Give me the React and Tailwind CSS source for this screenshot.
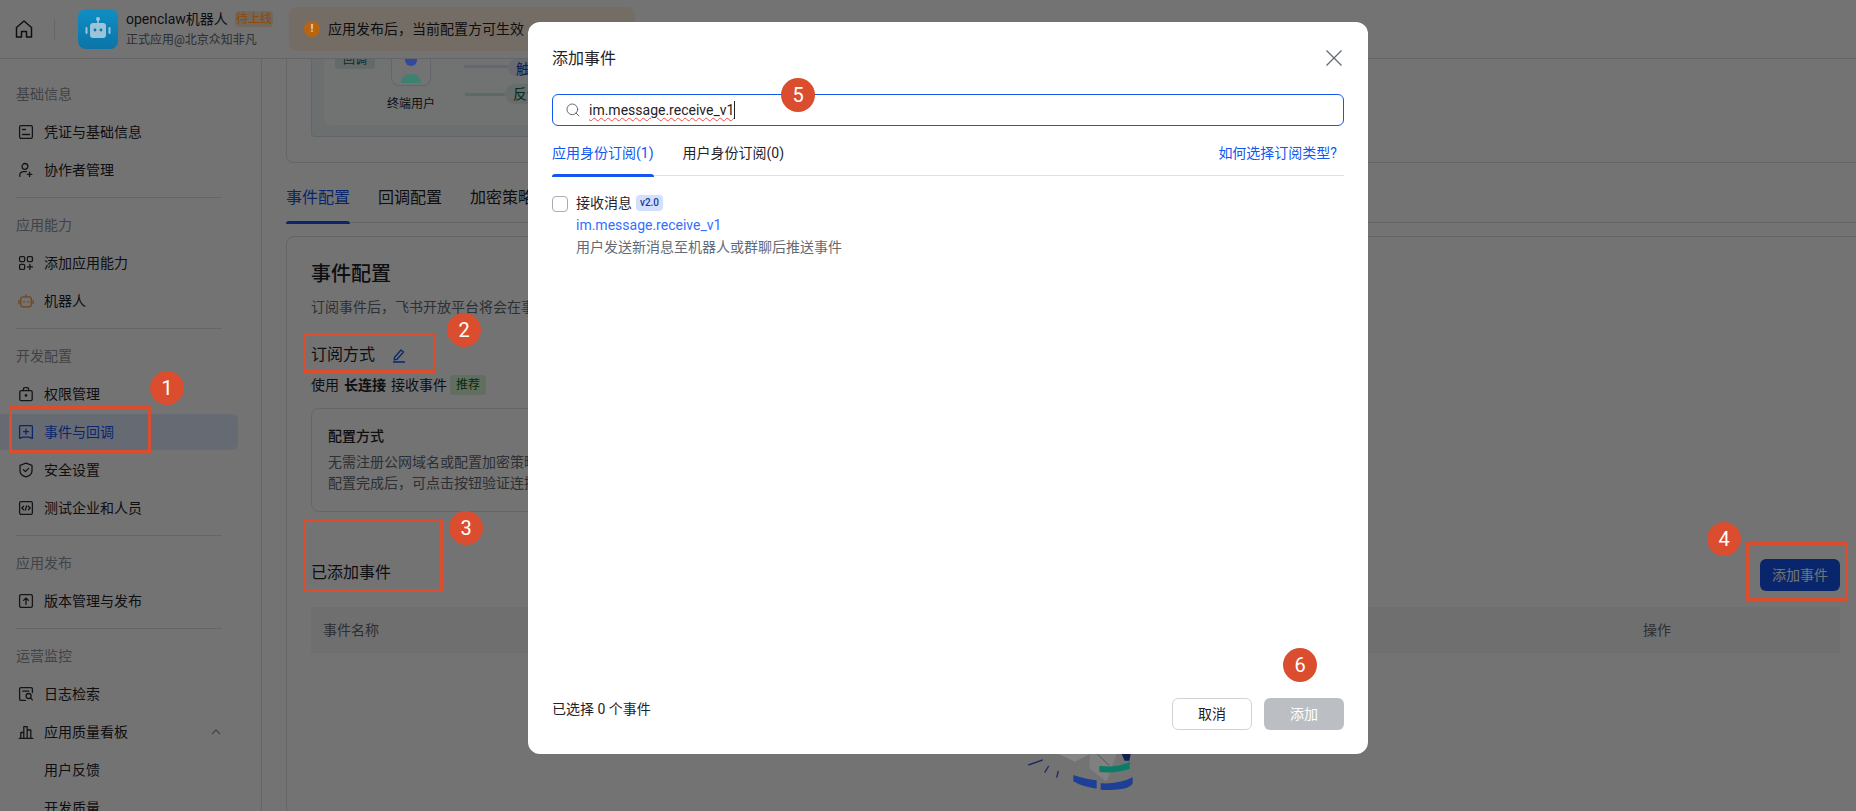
import { Search } from 'lucide-react';

const FONT = "font-['Roboto','Noto_Sans_CJK_SC',sans-serif]";

// stroke icons for the side menu, all on a 16 box
function Ico({ children, className = 'text-[#2b2f36]' }) {
  return (
    <svg width="16" height="16" viewBox="0 0 16 16" fill="none" stroke="currentColor" strokeWidth="1.300" strokeLinecap="round" strokeLinejoin="round" className={`shrink-0 ${className}`}>
      {children}
    </svg>
  );
}

const icons = {
  card: <><rect x="1.600" y="1.600" width="12.800" height="12.800" rx="1.600" /><path d="M4.500 5.500h3M4.500 10.500h7" /></>,
  user: <><circle cx="7" cy="4.400" r="2.900" /><path d="M1.800 14.400v-1.200c0-2.200 1.800-3.600 4-3.600h2.600M11.600 10.200v4.400M9.400 12.400h4.400" /></>,
  apps: <><rect x="1.600" y="1.600" width="5" height="5" rx="1" /><rect x="9.400" y="1.600" width="5" height="5" rx="1" /><rect x="1.600" y="9.400" width="5" height="5" rx="1" /><path d="M11.900 9.400v5M9.400 11.900h5" /></>,
  bot: <><rect x="2.800" y="3.800" width="10.400" height="10" rx="2" /><path d="M8 3.800V1.800M.9 7.400v3.200M15.100 7.400v3.200M6 8.600v.6M10 8.600v.6" /></>,
  bag: <><rect x="1.800" y="4.600" width="12.400" height="10" rx="1.400" /><path d="M5.400 4.600V3a1.400 1.400 0 0 1 1.400-1.400h2.400A1.400 1.400 0 0 1 10.600 3v1.600" /><circle cx="8" cy="9.400" r=".7" fill="currentColor" /></>,
  event: <><path d="M1.600 2.600a1 1 0 0 1 1-1h10.800a1 1 0 0 1 1 1v11.800L11 13.200H5L1.600 14.400z" /><path d="M8 5.200v5M5.500 7.700h5" /></>,
  shield: <><path d="M8 1.200l6 2.200v5.400c0 3-2.600 5.200-6 6-3.400-.8-6-3-6-6V3.400z" /><path d="M5.500 7.800l1.900 1.800 3.200-3.200" /></>,
  code: <><rect x="1.600" y="1.600" width="12.800" height="12.800" rx="1.600" /><path d="M5.600 6.200L3.800 8l1.800 1.800M10.400 6.200L12.200 8l-1.800 1.800M8.700 5.800l-1.400 4.400" /></>,
  upload: <><rect x="1.600" y="1.600" width="12.800" height="12.800" rx="1.600" /><path d="M8 11.400V5.200M5.600 7.400L8 5l2.400 2.400" /></>,
  log: <><path d="M14.400 6.500V3a1.400 1.400 0 0 0-1.400-1.400H3A1.400 1.400 0 0 0 1.600 3v10A1.400 1.400 0 0 0 3 14.400h4.500M4.800 5.200h6" /><circle cx="10.600" cy="10" r="2.500" /><path d="M12.500 12l1.900 1.900" /></>,
  chart: <><path d="M1.200 14.400h13.600M2.800 14.400V8.500h3v5.900M5.800 14.400V2.600h3.400v11.800M9.200 14.400V6h3.600v8.400" /></>,
};

function Label({ children }) {
  return <div className="h-[38px] pl-4 flex items-center text-sm text-[#8f959e]">{children}</div>;
}

function Item({ icon, children, active, iconClass, arrow }) {
  return (
    <div className="h-[38px] flex items-center">
      <div className={`w-[238px] h-9 flex items-center gap-[10px] pl-[18px] pr-4 rounded-r-md text-sm ${active ? 'bg-[#e1eaff] text-[#1456f0]' : 'text-[#1f2329]'}`}>
        {icon ? <Ico className={active ? 'text-[#1456f0]' : iconClass}>{icons[icon]}</Ico> : <span className="w-4 shrink-0" />}
        <span className="flex-1">{children}</span>
        {arrow && (
          <svg width="12" height="12" viewBox="0 0 12 12" fill="none" stroke="#8f959e" strokeWidth="1.200"><path d="M2 8l4-4 4 4" /></svg>
        )}
      </div>
    </div>
  );
}

function Divider() {
  return <div className="ml-4 w-[206px] h-px bg-[#dee0e3] my-2" />;
}

function Sidebar() {
  return (
    <aside className="w-[262px] shrink-0 border-r border-[#dee0e3] pt-4">
      <Label>基础信息</Label>
      <Item icon="card">凭证与基础信息</Item>
      <Item icon="user">协作者管理</Item>
      <Divider />
      <Label>应用能力</Label>
      <Item icon="apps">添加应用能力</Item>
      <Item icon="bot" iconClass="text-[#f09c3e]">机器人</Item>
      <Divider />
      <Label>开发配置</Label>
      <Item icon="bag">权限管理</Item>
      <Item icon="event" active>事件与回调</Item>
      <Item icon="shield">安全设置</Item>
      <Item icon="code">测试企业和人员</Item>
      <Divider />
      <Label>应用发布</Label>
      <Item icon="upload">版本管理与发布</Item>
      <Divider />
      <Label>运营监控</Label>
      <Item icon="log">日志检索</Item>
      <Item icon="chart" arrow>应用质量看板</Item>
      <Item>用户反馈</Item>
      <Item>开发质量</Item>
    </aside>
  );
}

function Header() {
  return (
    <header className="h-[59px] shrink-0 flex items-center bg-white border-b border-[#dee0e3]">
      <svg width="20" height="20" viewBox="0 0 20 20" fill="none" stroke="#1f2329" strokeWidth="1.500" strokeLinejoin="round" className="ml-[14px]">
        <path d="M2.500 8.500L10 2l7.500 6.500V18h-5v-5.500h-5V18h-5z" />
      </svg>
      <div className="ml-[20px] w-px h-5 bg-[#dee0e3]" />
      {/* logo and warning colours stay saturated in the reference, so they sit over the dim layer */}
      <div className="relative z-[25] ml-[23px] w-10 h-10 rounded-lg bg-gradient-to-b from-[#0f8fc4] to-[#0b74a8] flex items-center justify-center">
        <svg width="28" height="28" viewBox="0 0 28 28" fill="#9cc4d8">
          <circle cx="14" cy="4" r="2" />
          <rect x="13.200" y="4" width="1.600" height="4" />
          <rect x="6" y="8" width="16" height="15" rx="3" />
          <rect x="1.500" y="12" width="2" height="7" rx="1" />
          <rect x="24.500" y="12" width="2" height="7" rx="1" />
          <circle cx="11" cy="15" r="1.400" fill="#0b74a8" />
          <circle cx="17" cy="15" r="1.400" fill="#0b74a8" />
        </svg>
      </div>
      <div className="ml-2 w-[163px]">
        <div className="flex items-center h-[22px]">
          <span className="text-sm text-[#1f2329]">openclaw机器人</span>
          <span className="ml-[7px] h-4 px-px rounded bg-[#ffe6cc] text-xs leading-4">
            <span className="relative z-[25] text-[#8f4708]">待上线</span>
          </span>
        </div>
        <div className="text-xs leading-5 text-[#646a73]">正式应用@北京众知非凡</div>
      </div>
      <div className="w-[346px] h-11 rounded-lg bg-[#fff1e0] flex items-center pl-[15px]">
        <span className="relative z-[25] w-4 h-4 rounded-full bg-[#b9640f] text-[#e0d5c8] text-[11px] font-bold leading-4 text-center">!</span>
        <span className="ml-2 text-sm text-[#1f2329]">应用发布后，当前配置方可生效</span>
        <span className="ml-[37px] text-sm text-[#1456f0]">申请发布</span>
      </div>
    </header>
  );
}

// the flow diagram is scrolled mostly under the header
function FlowCard() {
  return (
    <div className="relative h-[104px] mr-[-9px] border border-t-0 border-[#dee0e3] rounded-b-lg">
      <div className="absolute left-[24px] top-0 w-[900px] h-[78px] bg-[#eef6f6] border border-t-0 border-[#dee0e3] rounded-b-sm">
        <div className="ml-3 mr-3 h-[66px] bg-[#fbfdfd] rounded-b-md" />
      </div>
      <div className="absolute left-[48px] top-0 w-10 h-[10px] overflow-hidden rounded-b bg-[#dcecec] text-xs leading-[3px] text-center text-[#23605c]">回调</div>
      <div className="absolute left-[104px] top-0 w-10 h-[27px] overflow-hidden bg-white border border-t-0 border-[#dde0f0] rounded-b-lg flex justify-center">
        <svg width="28" height="26" viewBox="0 0 28 26" className="relative z-[25]">
          <circle cx="14" cy="1" r="6" fill="#33479f" />
          <path d="M4 24c0-12 20-12 20 0z" fill="#3c8270" />
        </svg>
      </div>
      <div className="absolute left-[100px] top-[36px] text-xs leading-[18px] text-[#1f2329]">终端用户</div>
      <div className="absolute left-[177px] top-[6px] w-[44px] h-[3px] bg-[#e1e4f5]" />
      <div className="absolute left-[221px] top-0 w-[40px] h-[17px] rounded-l-full bg-[#e8eafc] text-sm leading-[20px] pl-2 text-[#1e3fae]">触发</div>
      <div className="absolute left-[178px] top-[34px] w-[40px] h-[3px] bg-[#cfe8e2]" />
      <div className="absolute left-[218px] top-[25px] w-[40px] h-[20px] rounded-l-full bg-[#e3f1ec] text-sm leading-[20px] pl-2 text-[#0c5f49]">反馈</div>
    </div>
  );
}

function EventCard() {
  return (
    <section className="mt-[13px] mr-[-9px] border border-[#dee0e3] rounded-lg pl-6 pr-6 pt-[23px] h-[640px]">
      <h2 className="text-xl leading-7 font-medium text-[#1f2329]">事件配置</h2>
      <p className="mt-2 text-sm leading-[22px] text-[#646a73]">订阅事件后，飞书开放平台将会在事件发生时推送给应用</p>
      <div className="mt-[25px] flex items-center gap-4 text-base leading-6 text-[#1f2329]">
        订阅方式
        <svg width="16" height="16" viewBox="0 0 16 16" fill="none" stroke="#1456f0" strokeWidth="1.300" strokeLinejoin="round">
          <path d="M3.500 10.500l6.500-7.500 2.500 2-6.500 7.300-2.700.6zM2 15h12" />
        </svg>
      </div>
      <div className="mt-[7px] flex items-center text-sm leading-[22px] text-[#1f2329]">
        使用<b className="mx-[5px] font-semibold">长连接</b>接收事件
        <span className="ml-[3px] h-5 px-[6px] rounded bg-[#d9f5d6] text-xs leading-5 text-[#186010]">推荐</span>
      </div>
      <div className="mt-3 w-[860px] h-[104px] border border-[#dee0e3] rounded-lg pl-4 pt-4">
        <div className="text-sm leading-[22px] font-medium text-[#1f2329]">配置方式</div>
        <p className="mt-[5px] text-sm leading-[21px] text-[#646a73]">无需注册公网域名或配置加密策略，通过飞书 SDK 建立长连接即可接收事件</p>
        <p className="text-sm leading-[21px] text-[#646a73]">配置完成后，可点击按钮验证连接状态</p>
      </div>
      <div className="mt-[47px] flex justify-between items-start">
        <span className="pt-[2px] text-base leading-6 text-[#1f2329]">已添加事件</span>
        <button className="w-20 h-8 rounded-md bg-[#1456f0] text-sm text-white">添加事件</button>
      </div>
      <div className="mt-4 h-[46px] bg-[#f5f6f7] flex items-center justify-between pl-3 text-sm text-[#646a73]">
        <span>事件名称</span>
        <span className="w-[197px]">操作</span>
      </div>
    </section>
  );
}

function Dialog() {
  return (
    <div className="absolute z-30 left-[528px] top-[22px] w-[840px] h-[732px] bg-white rounded-xl px-6 flex flex-col">
      <div className="h-[72px] flex items-center justify-between">
        <span className="pt-[2px] text-base text-[#1f2329]">添加事件</span>
        <svg width="16" height="16" viewBox="0 0 16 16" stroke="#646a73" strokeWidth="1.300" className="mr-[2px]">
          <path d="M.5.500l15 15M15.500.500l-15 15" />
        </svg>
      </div>
      <div className="h-8 border border-[#1456f0] rounded-md flex items-center pl-3">
        <Search size={16} strokeWidth={1.500} className="text-[#646a73]" />
        <span className="ml-2 text-sm text-[#1f2329] underline decoration-wavy decoration-[#f54a45] decoration-1 underline-offset-2">im.message.receive_v1</span>
        <span className="w-px h-[18px] bg-[#1f2329]" />
      </div>
      <div className="mt-[14px] h-[36px] border-b border-[#dee0e3] flex items-start justify-between text-sm leading-[26px]">
        <div className="flex gap-[29px]">
          <span className="relative h-[36px] text-[#1456f0]">
            应用身份订阅(1)
            <span className="absolute left-0 right-0 bottom-[-1px] h-[3px] rounded-t bg-[#1456f0]" />
          </span>
          <span className="text-[#1f2329]">用户身份订阅(0)</span>
        </div>
        <span className="mr-[7px] text-[#1456f0]">如何选择订阅类型?</span>
      </div>
      <div className="mt-[18px] flex gap-2">
        <div className="mt-[2px] w-4 h-4 shrink-0 bg-white border border-[#a8adb5] rounded" />
        <div>
          <div className="flex items-center h-[18px] text-sm text-[#1f2329]">
            接收消息
            <span className="ml-1 h-4 w-[27px] rounded bg-[#d4e0fb] text-[10px] font-medium leading-4 text-center text-[#133c9a]">v2.0</span>
          </div>
          <div className="mt-[2px] text-sm leading-[22px] text-[#3370ff]">im.message.receive_v1</div>
          <div className="text-sm leading-[22px] text-[#646a73]">用户发送新消息至机器人或群聊后推送事件</div>
        </div>
      </div>
      <div className="mt-auto h-[56px] flex justify-between">
        <span className="text-sm leading-[22px] text-[#1f2329]">已选择 0 个事件</span>
        <div className="flex gap-3">
          <button className="w-20 h-8 rounded-md border border-[#d0d3d6] text-sm text-[#1f2329]">取消</button>
          <button className="w-20 h-8 rounded-md bg-[#bbbfc4] text-sm text-white">添加</button>
        </div>
      </div>
    </div>
  );
}

function Mark({ n, className }) {
  return (
    <div className={`absolute z-40 w-[34px] h-[34px] rounded-full bg-[#da4d2f] text-white text-xl leading-[34px] text-center ${className}`}>
      {n}
    </div>
  );
}

export default function App() {
  return (
    <div className={`relative w-[1856px] h-[811px] overflow-hidden bg-white ${FONT}`}>
      <div className="h-full flex flex-col">
        <Header />
        <div className="flex-1 min-h-0 flex">
          <Sidebar />
          <main className="flex-1 min-w-0 pl-6">
            <FlowCard />
            <div className="mt-[13px] h-[47px] mr-[-9px] border-b border-[#dee0e3] flex gap-7 text-base">
              <span className="relative h-[47px] pt-[10px] text-[#1456f0]">
                事件配置
                <span className="absolute left-0 right-0 bottom-[-1px] h-[3px] rounded-t bg-[#1456f0]" />
              </span>
              <span className="pt-[10px] text-[#1f2329]">回调配置</span>
              <span className="pt-[10px] text-[#1f2329]">加密策略</span>
            </div>
            <EventCard />
          </main>
        </div>
      </div>

      <div className="absolute inset-0 z-20 bg-black/55" />

      {/* empty state picture, mostly under the dialog */}
      <svg width="140" height="60" viewBox="0 0 420 180" className="absolute z-[25] left-[1010px] top-[745px]">
        <path d="M145 27l50 23 45-23z" fill="#868686" />
        <path d="M240 27l-2 43 52 40 30-83z" fill="#808080" />
        <path d="M262 27l36 35" stroke="#555" strokeWidth="3" />
        <path d="M335 27h27l-4 20-14 0z" fill="#0f1f55" />
        <path d="M268 62c30 5 60 3 92-12l-1 22c-30 10-60 12-91 9z" fill="#0a7d68" />
        <path d="M190 90c22 8 46 13 70 16v25c-26-3-50-10-70-22z" fill="#1e3f95" />
        <path d="M272 115c36 2 68-4 96-18v18c-8 18-50 22-96 19z" fill="#1e3f95" />
        <path d="M55 60l43-15M104 83l12-20M140 98l5-20" stroke="#1a2a60" strokeWidth="4" />
      </svg>

      <Dialog />

      {/* red notes drawn on top of the screenshot */}
      <div className="absolute z-40 left-[9px] top-[406px] w-[142px] h-[47px] border-[3px] border-[#da4d2f]" />
      <div className="absolute z-40 left-[303px] top-[333px] w-[133px] h-[40px] border-[3px] border-[#da4d2f]" />
      <div className="absolute z-40 left-[303px] top-[519px] w-[140px] h-[73px] border-[3px] border-[#da4d2f]" />
      <div className="absolute z-40 left-[1746px] top-[542px] w-[102px] h-[59px] border-[3px] border-[#da4d2f]" />
      <Mark n="1" className="left-[150px] top-[371px]" />
      <Mark n="2" className="left-[447px] top-[313px]" />
      <Mark n="3" className="left-[449px] top-[511px]" />
      <Mark n="4" className="left-[1707px] top-[522px]" />
      <Mark n="5" className="left-[781px] top-[78px]" />
      <Mark n="6" className="left-[1283px] top-[648px]" />
    </div>
  );
}
